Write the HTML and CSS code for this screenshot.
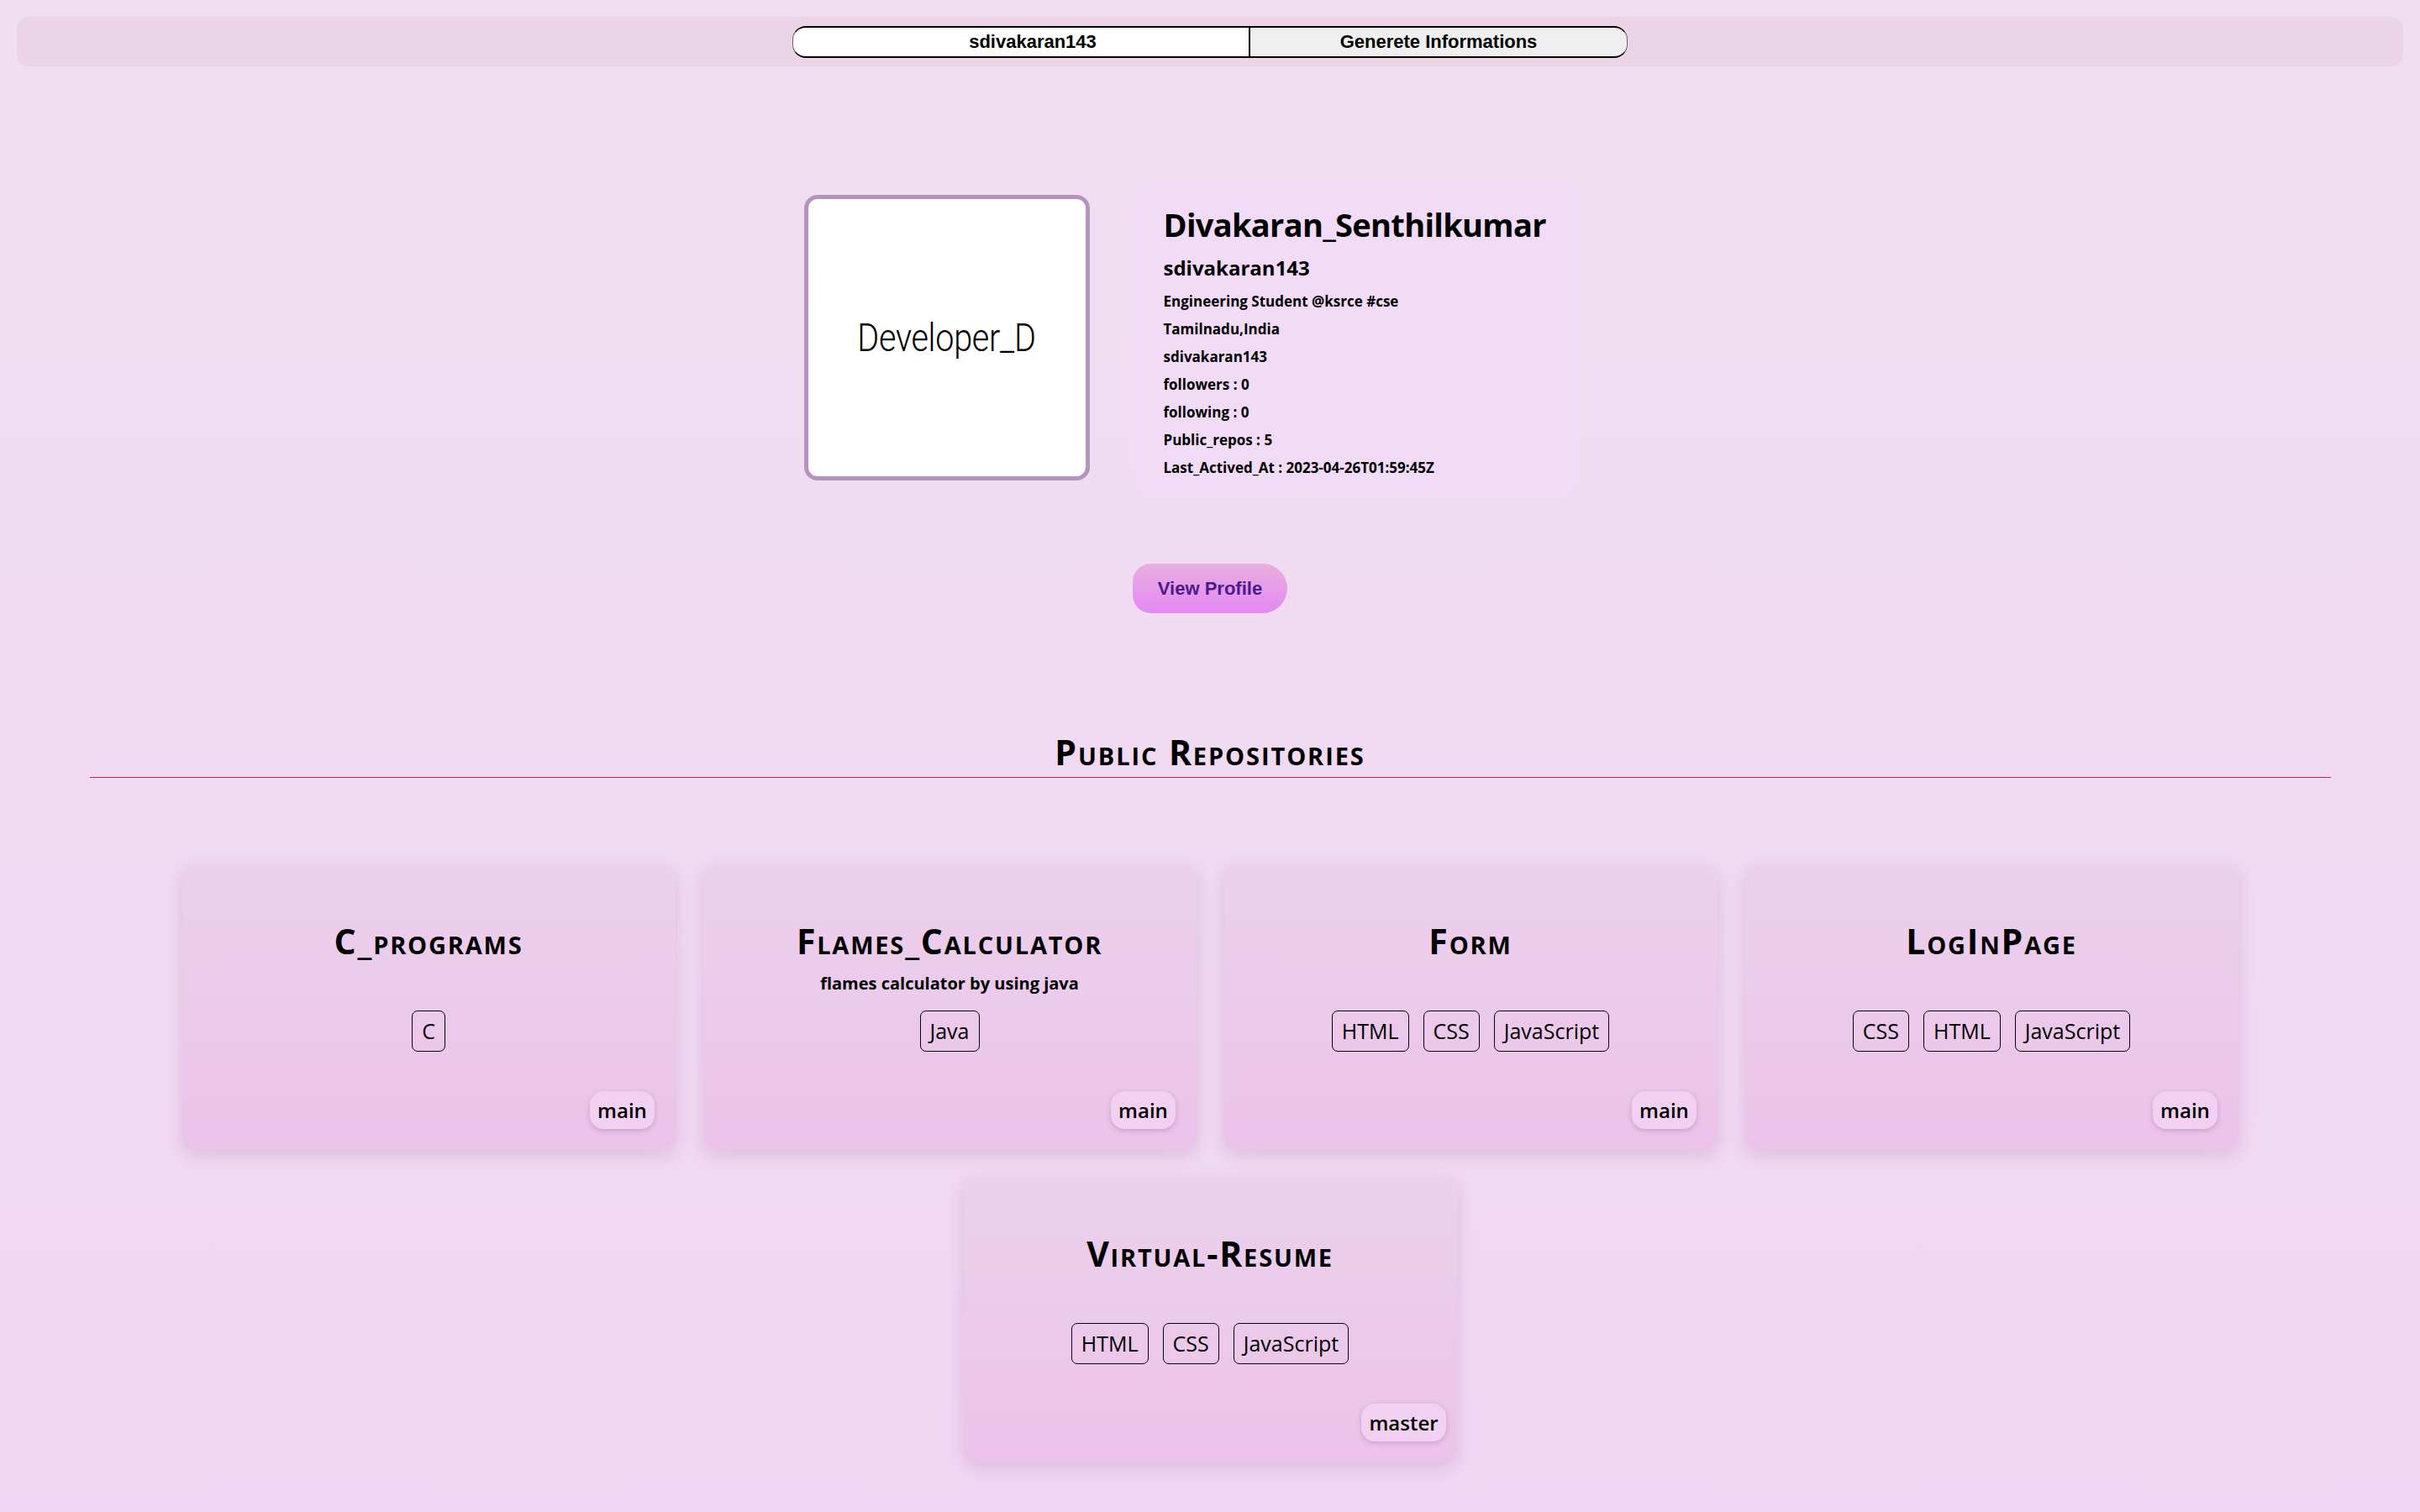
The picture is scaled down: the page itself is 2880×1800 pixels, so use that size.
FILE: index.html
```html
<!DOCTYPE html>
<html lang="en">
<head>
    <meta charset="UTF-8">
    <meta name="viewport" content="width=device-width, initial-scale=1.0">
    <title>GitHub Profile Viewer</title>
    <link rel="stylesheet" href="styles.css">
</head>
<body>
    <header class="topbar">
        <form class="search">
            <input type="text" class="search-input" value="sdivakaran143">
            <button type="button" class="search-btn">Generete Informations</button>
        </form>
    </header>

    <section class="profile">
        <div class="avatar">
            <span class="avatar-text">Developer_D</span>
        </div>
        <div class="info">
            <h1 class="info-name">Divakaran_Senthilkumar</h1>
            <h2 class="info-login">sdivakaran143</h2>
            <p class="info-line">Engineering Student @ksrce #cse</p>
            <p class="info-line">Tamilnadu,India</p>
            <p class="info-line">sdivakaran143</p>
            <p class="info-line">followers : 0</p>
            <p class="info-line">following : 0</p>
            <p class="info-line">Public_repos : 5</p>
            <p class="info-line">Last_Actived_At : 2023-04-26T01:59:45Z</p>
        </div>
    </section>

    <div class="actions">
        <a class="view-btn" href="#">View Profile</a>
    </div>

    <h2 class="repos-title">Public Repositories</h2>
    <hr class="divider">

    <section class="repo-grid">
        <div class="repo-card">
            <h3 class="repo-name">C_programs</h3>
            <p class="repo-desc"></p>
            <div class="repo-langs">
                <span class="lang">C</span>
            </div>
            <div class="repo-foot"><div class="branch-slot"><span class="branch">main</span></div></div>
        </div>
        <div class="repo-card">
            <h3 class="repo-name">Flames_Calculator</h3>
            <p class="repo-desc">flames calculator by using java</p>
            <div class="repo-langs">
                <span class="lang">Java</span>
            </div>
            <div class="repo-foot"><div class="branch-slot"><span class="branch">main</span></div></div>
        </div>
        <div class="repo-card">
            <h3 class="repo-name">Form</h3>
            <p class="repo-desc"></p>
            <div class="repo-langs">
                <span class="lang">HTML</span>
                <span class="lang">CSS</span>
                <span class="lang">JavaScript</span>
            </div>
            <div class="repo-foot"><div class="branch-slot"><span class="branch">main</span></div></div>
        </div>
        <div class="repo-card">
            <h3 class="repo-name">LogInPage</h3>
            <p class="repo-desc"></p>
            <div class="repo-langs">
                <span class="lang">CSS</span>
                <span class="lang">HTML</span>
                <span class="lang">JavaScript</span>
            </div>
            <div class="repo-foot"><div class="branch-slot"><span class="branch">main</span></div></div>
        </div>
        <div class="repo-card">
            <h3 class="repo-name">Virtual-Resume</h3>
            <p class="repo-desc"></p>
            <div class="repo-langs">
                <span class="lang">HTML</span>
                <span class="lang">CSS</span>
                <span class="lang">JavaScript</span>
            </div>
            <div class="repo-foot"><div class="branch-slot"><span class="branch">master</span></div></div>
        </div>
    </section>
</body>
</html>
```

FILE: styles.css
```css
:root {
    --bar-bg: #ebd3e8;
    --info-bg: #f2dbf6;
    --avatar-border: #b692c0;
    --line-color: #c8284f;
    --text-color: #000;
    --card-shadow: 0 6px 20px rgba(120, 60, 120, 0.18);
}
body {
    margin: 0;
    min-height: 100vh;
    font-family: 'Open Sans', 'Noto Sans', sans-serif;
    color: var(--text-color);
    background: linear-gradient(180deg, #efdfef 0%, #f2d6f5 100%);
    padding-bottom: 40px;
}
.topbar {
    margin: 20px 20px 0;
    height: 59px;
    background: var(--bar-bg);
    border-radius: 14px;
    display: flex;
    justify-content: center;
    align-items: center;
}
.search {
    display: flex;
    margin: 0;
}
.search-input,
.search-btn {
    box-sizing: border-box;
    height: 38px;
    font-family: 'Liberation Sans', Arial, sans-serif;
    font-size: 22px;
    font-weight: 700;
    text-align: center;
    color: #000;
    border: 1px solid #000;
    border-width: 2px 1px;
}
.search-input {
    width: 544px;
    padding: 0 0 0 28px;
    background: #fff;
    border-radius: 16px 0 0 16px;
    border-left-color: #666;
    outline: none;
}
.search-btn {
    width: 450px;
    background: #efefef;
    border-radius: 0 16px 16px 0;
    border-right-color: #666;
    cursor: pointer;
}
.profile {
    display: flex;
    justify-content: center;
    align-items: center;
    gap: 53px;
    margin-top: 136px;
    padding-right: 48px;
}
.avatar {
    box-sizing: border-box;
    width: 340px;
    height: 340px;
    border: 5px solid var(--avatar-border);
    border-radius: 16px;
    background: #fff;
    display: flex;
    justify-content: center;
    align-items: center;
}
.avatar-text {
    font-family: Roboto, sans-serif;
    font-weight: 300;
    font-size: 46px;
    transform: scaleX(0.86);
    letter-spacing: -0.3px;
}
.info {
    box-sizing: border-box;
    width: 526px;
    padding: 26px 30px 16px 35px;
    background: var(--info-bg);
    border-radius: 20px;
}
.info-name {
    margin: 0;
    font-size: 38px;
    line-height: 52px;
    font-weight: 700;
    letter-spacing: -0.7px;
    white-space: nowrap;
}
.info-login {
    margin: 10px 0 7px;
    font-size: 24px;
    line-height: 32px;
    font-weight: 700;
}
.info-line {
    margin: 0;
    font-size: 17px;
    line-height: 33px;
    font-weight: 700;
    white-space: nowrap;
}
.actions {
    display: flex;
    justify-content: center;
    margin-top: 82px;
}
.view-btn {
    box-sizing: border-box;
    width: 184px;
    height: 59px;
    display: flex;
    justify-content: center;
    align-items: center;
    border-radius: 22px 30px 30px 22px;
    background: linear-gradient(180deg, #e9afdf 0%, #e488f4 100%);
    color: #4b1a8c;
    font-family: 'Liberation Sans', Arial, sans-serif;
    font-size: 22px;
    font-weight: 700;
    text-decoration: none;
}
.repos-title {
    margin: 139px 0 0;
    text-align: center;
    font-size: 41px;
    line-height: 52px;
    font-weight: 700;
    font-variant: small-caps;
    letter-spacing: 1.9px;
}
.divider {
    margin: 4px 106px 0 107px;
    border: 0;
    border-top: 1px solid var(--line-color);
}
.repo-grid {
    display: flex;
    flex-wrap: wrap;
    justify-content: center;
    gap: 33px;
    margin-top: 104px;
}
.repo-card {
    box-sizing: border-box;
    width: 587px;
    height: 339px;
    padding-top: 64px;
    display: flex;
    flex-direction: column;
    align-items: center;
    border-radius: 16px;
    background: linear-gradient(180deg, #ebd1ec 0%, #ecc2ea 100%);
    box-shadow: var(--card-shadow);
}
.repo-name {
    margin: 0;
    font-size: 41px;
    line-height: 52px;
    font-weight: 700;
    font-variant: small-caps;
    letter-spacing: 1.8px;
}
.repo-desc {
    margin: 11px 0 0;
    height: 28px;
    font-size: 20px;
    line-height: 28px;
    font-weight: 700;
}
.repo-langs {
    display: flex;
    gap: 17px;
    margin-top: 18px;
}
.lang {
    box-sizing: border-box;
    height: 49px;
    padding: 0 11px;
    border: 1px solid #000;
    border-radius: 7px;
    font-size: 25px;
    line-height: 47px;
}
.repo-foot {
    align-self: stretch;
    display: flex;
    justify-content: flex-end;
    margin-top: 47px;
}
.branch-slot {
    width: 126px;
    display: flex;
    justify-content: center;
}
.branch {
    box-sizing: border-box;
    height: 45px;
    padding: 0 9px;
    border-radius: 16px;
    background: #f1d0f1;
    box-shadow: 0 2px 6px rgba(90, 30, 90, 0.22);
    font-size: 24px;
    font-weight: 600;
    line-height: 45px;
}
```
